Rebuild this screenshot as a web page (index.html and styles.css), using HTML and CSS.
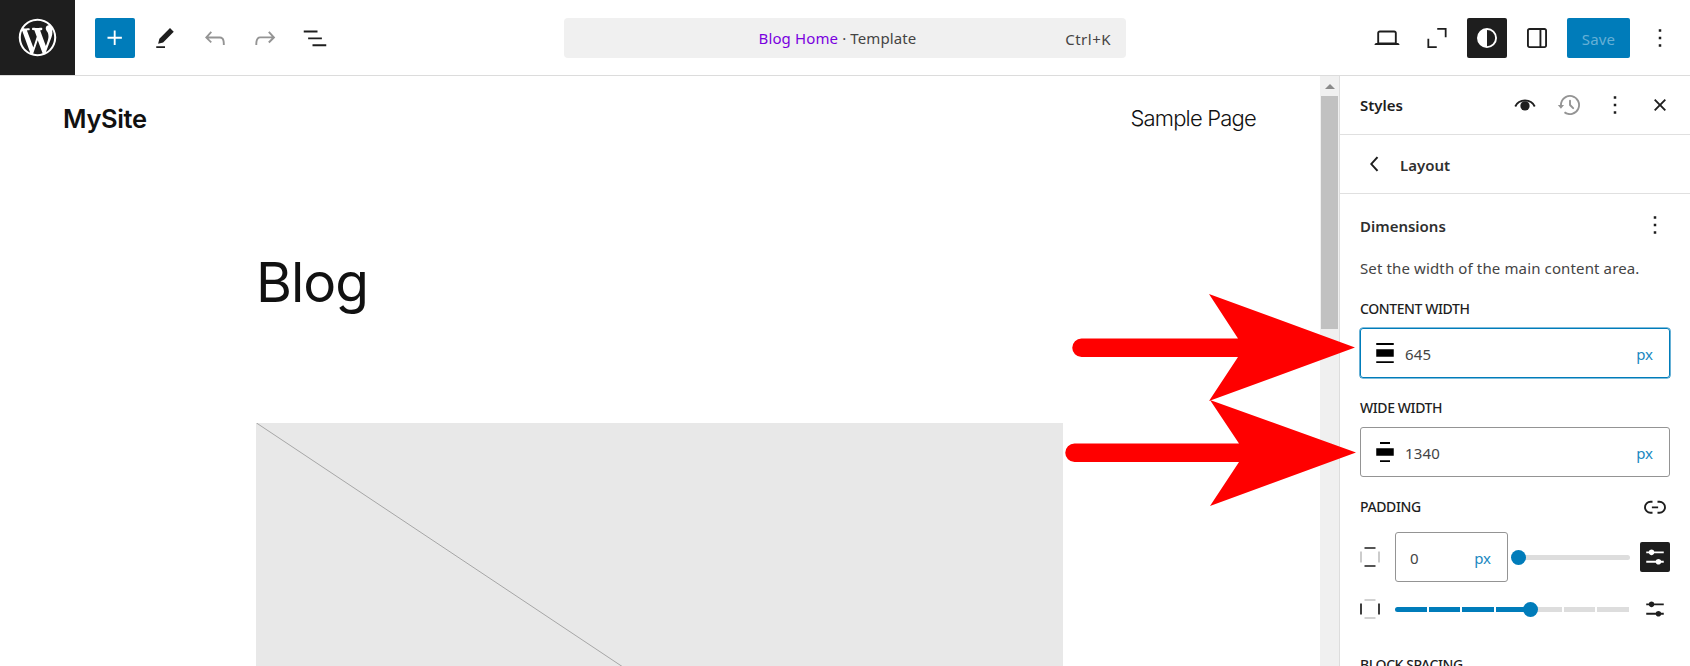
FILE: index.html
```html
<!DOCTYPE html>
<html lang="en">
<head>
<meta charset="utf-8">
<title>Blog Home · Template</title>
<link rel="stylesheet" href="styles.css">
</head>
<body>
<div class="editor">
  <header class="topbar">
    <a class="site-hub"><svg class="wp" viewBox="-2 -2 24 24"><path d="M20 10c0-5.51-4.49-10-10-10C4.48 0 0 4.49 0 10c0 5.52 4.48 10 10 10 5.51 0 10-4.48 10-10zM7.78 15.37L4.37 6.22c.55-.02 1.17-.08 1.17-.08.5-.06.44-1.13-.06-1.11 0 0-1.45.11-2.37.11-.18 0-.37 0-.58-.01C4.12 2.69 6.87 1.11 10 1.11c2.33 0 4.45.87 6.05 2.34-.68-.11-1.65.39-1.65 1.58 0 .74.45 1.36.9 2.1.35.61.55 1.36.55 2.46 0 1.49-1.4 5-1.4 5l-3.03-8.37c.54-.02.82-.17.82-.17.5-.05.44-1.25-.06-1.22 0 0-1.44.12-2.38.12-.87 0-2.33-.12-2.33-.12-.5-.03-.56 1.2-.06 1.22l.92.08 1.26 3.41zM17.41 10c.24-.64.74-1.87.43-4.25.7 1.29 1.05 2.71 1.05 4.25 0 3.29-1.73 6.24-4.4 7.78.97-2.59 1.94-5.2 2.92-7.78zM6.1 18.09C3.12 16.65 1.11 13.53 1.11 10c0-1.3.23-2.48.72-3.59C3.25 10.3 4.67 14.2 6.1 18.09zm4.03-6.63l2.58 6.98c-.86.29-1.76.45-2.71.45-.79 0-1.57-.11-2.29-.33.81-2.38 1.62-4.74 2.42-7.1z"/></svg></a>
    <div class="tools">
      <button class="tool primary"><svg class="icon" viewBox="0 0 24 24"><path d="M11 12.500V17.500H12.500V12.500H17.500V11H12.500V6H11V11H6V12.500H11Z"/></svg></button>
      <button class="tool"><svg class="icon" viewBox="0 0 24 24"><path d="m19 7-3-3-8.500 8.500-1 4 4-1L19 7Zm-7 11.500H5V20h7v-1.500Z"/></svg></button>
      <button class="tool muted"><svg class="icon" viewBox="0 0 24 24"><path d="M18.300 11.700c-.6-.6-1.400-.9-2.300-.9H6.700l2.900-3.300-1.100-1-4.500 5L8.500 16l1-1-2.700-2.700H16c.5 0 .9.2 1.300.5 1 1 1 3.400 1 4.500v.3h1.500v-.2c0-1.500 0-4.300-1.500-5.700z"/></svg></button>
      <button class="tool muted"><svg class="icon" viewBox="0 0 24 24"><path d="M15.600 6.500l-1.100 1 2.900 3.300H8c-.9 0-1.700.3-2.300.9-1.400 1.500-1.400 4.200-1.400 5.600v.2h1.500v-.3c0-1.100 0-3.500 1-4.500.3-.3.7-.5 1.300-.5h9.200L14.500 15l1.100 1.100 4.600-4.600-4.600-5z"/></svg></button>
      <button class="tool"><svg class="icon" viewBox="0 0 24 24"><path d="M3 6h11v1.500H3V6Zm3.500 5.500h11V13h-11v-1.500ZM21 17H10v1.500h11V17Z"/></svg></button>
    </div>
    <div class="command">
      <span class="command-title"><span class="command-link">Blog Home</span> · Template</span>
      <span class="command-key">Ctrl+K</span>
    </div>
    <div class="actions">
      <button class="tool"><svg class="icon" viewBox="0 0 24 24"><path d="M20.500 16h-.7V8c0-1.100-.9-2-2-2H6.200c-1.100 0-2 .9-2 2v8h-.7c-.8 0-1.500.7-1.500 1.500h20c0-.8-.7-1.500-1.500-1.500zM5.700 8c0-.3.2-.5.5-.5h11.600c.3 0 .5.2.5.5v7.600H5.700V8z"/></svg></button>
      <button class="tool"><svg class="icon line" viewBox="0 0 24 24"><path d="M12.200 4.300H19.300V11.400M4.700 12.600V19.700H11.800" transform="translate(.6 .6) scale(.95)"/></svg></button>
      <button class="tool pressed"><svg class="icon" viewBox="0 0 24 24"><path fill-rule="evenodd" d="M20 12a8 8 0 1 1-16 0 8 8 0 0 1 16 0Zm-1.500 0a6.500 6.500 0 0 1-6.500 6.500v-13a6.500 6.500 0 0 1 6.500 6.500Z"/></svg></button>
      <button class="tool"><svg class="icon" viewBox="0 0 24 24"><path d="M18 4H6c-1.100 0-2 .9-2 2v12c0 1.100.9 2 2 2h12c1.100 0 2-.9 2-2V6c0-1.100-.9-2-2-2zm-4 14.500H6c-.3 0-.5-.2-.5-.5V6c0-.3.2-.5.5-.5h8v13zm4.500-.5c0 .3-.2.5-.5.5h-2.500v-13H18c.3 0 .5.2.5.5v12z"/></svg></button>
      <button class="save">Save</button>
      <button class="tool"><svg class="icon" viewBox="0 0 24 24"><path d="M13 19h-2v-2h2v2zm0-6h-2v-2h2v2zm0-6h-2V5h2v2z"/></svg></button>
    </div>
  </header>
  <div class="workspace">
    <main class="canvas">
      <div class="site-header">
        <span class="site-title">MySite</span>
        <span class="site-nav">Sample Page</span>
      </div>
      <h1 class="blog-title">Blog</h1>
      <div class="placeholder"><svg class="diagonal" viewBox="0 0 807 540"><path d="M0.500 0L807 537"/></svg></div>
    </main>
    <div class="scrollbar"><div class="scroll-up"></div><div class="scroll-thumb"></div></div>
    <aside class="sidebar">
      <div class="panel-head">
        <span class="heading styles-title">Styles</span>
        <div class="head-icons">
          <svg class="icon" viewBox="0 0 24 24"><path class="lash" d="M4.200 13.200C5.600 10.200 8.500 8.400 12 8.400s6.400 1.800 7.800 4.800"/><circle cx="12" cy="12.700" r="3.700"/></svg>
          <svg class="icon faded" viewBox="0 0 24 24"><path d="M5.500 12h1.750l-2.500 3-2.500-3H4a8 8 0 113.134 6.350l.907-1.194A6.500 6.500 0 105.500 12zm9.530 1.970l-2.280-2.280V8.500a.75.75 0 00-1.500 0V12a.747.747 0 00.218.529l2.502 2.502a.75.75 0 101.060-1.061z"/></svg>
          <svg class="icon" viewBox="0 0 24 24"><path d="M13 19h-2v-2h2v2zm0-6h-2v-2h2v2zm0-6h-2V5h2v2z"/></svg>
          <svg class="icon" viewBox="0 0 24 24"><path d="M12 13.060l3.712 3.713 1.061-1.060L13.061 12l3.712-3.712-1.060-1.060L12 10.938 8.288 7.227l-1.061 1.060L10.939 12l-3.712 3.712 1.060 1.061L12 13.061z"/></svg>
        </div>
      </div>
      <div class="panel-nav">
        <svg class="icon" viewBox="0 0 24 24"><path d="M14.600 7l-1.200-1L8 12l5.400 6 1.200-1-4.600-5z"/></svg>
        <span class="heading layout-title">Layout</span>
      </div>
      <div class="panel-body">
        <div class="section-head">
          <span class="heading dims-title">Dimensions</span>
          <svg class="icon" viewBox="0 0 24 24"><path d="M13 19h-2v-2h2v2zm0-6h-2v-2h2v2zm0-6h-2V5h2v2z"/></svg>
        </div>
        <p class="help">Set the width of the main content area.</p>
        <div class="label content-label">CONTENT WIDTH</div>
        <div class="field focused">
          <svg class="icon solid" viewBox="0 0 24 24"><path d="M5 4h14v1.500H5zM5 9h14v6H5zM5 18.500h14V20H5z"/></svg>
          <span class="value">645</span><span class="unit">px</span>
        </div>
        <div class="label wide-label">WIDE WIDTH</div>
        <div class="field">
          <svg class="icon solid" viewBox="0 0 24 24"><path d="M8 4h8v1.500H8zM5 9h14v6H5zM8 18.500h8V20H8z"/></svg>
          <span class="value">1340</span><span class="unit">px</span>
        </div>
        <div class="padding-head">
          <span class="label padding-label">PADDING</span>
          <svg class="icon" viewBox="0 0 24 24"><path d="M10 17.389H8.444A5.194 5.194 0 1 1 8.444 7H10v1.500H8.444a3.694 3.694 0 0 0 0 7.389H10v1.500ZM14 7h1.556a5.194 5.194 0 0 1 0 10.390H14v-1.500h1.556a3.694 3.694 0 0 0 0-7.390H14V7Zm-4.500 6h5v-1.500h-5V13Z"/></svg>
        </div>
        <div class="control-row">
          <svg class="sides" viewBox="0 0 20 20"><path class="on" d="M4.500 1h11M4.500 19h11"/><path class="off" d="M1 4.500v11M19 4.500v11"/></svg>
          <div class="mini-field"><span class="mini-value">0</span><span class="mini-unit">px</span></div>
          <div class="slider short"><span class="thumb"></span></div>
          <button class="settings pressed"><svg class="icon" viewBox="0 0 24 24"><path d="m19 7.500h-7.628c-.309-.874-1.142-1.500-2.122-1.500s-1.813.626-2.122 1.500H5V9h2.128c.309.874 1.142 1.500 2.122 1.500s1.813-.626 2.122-1.500H19zM19 15h-2.128c-.309-.874-1.142-1.500-2.122-1.500s-1.813.626-2.122 1.500H5v1.500h7.628c.309.874 1.142 1.500 2.122 1.500s1.813-.626 2.122-1.500H19z"/></svg></button>
        </div>
        <div class="control-row second">
          <svg class="sides" viewBox="0 0 20 20"><path class="off" d="M4.500 1h11M4.500 19h11"/><path class="on" d="M1 4.500v11M19 4.500v11"/></svg>
          <div class="slider long"><i class="seg fill"></i><i class="seg fill"></i><i class="seg fill"></i><i class="seg fill"></i><i class="seg"></i><i class="seg"></i><i class="seg"></i><span class="thumb mid"></span></div>
          <button class="settings"><svg class="icon" viewBox="0 0 24 24"><path d="m19 7.500h-7.628c-.309-.874-1.142-1.500-2.122-1.500s-1.813.626-2.122 1.500H5V9h2.128c.309.874 1.142 1.500 2.122 1.500s1.813-.626 2.122-1.500H19zM19 15h-2.128c-.309-.874-1.142-1.500-2.122-1.500s-1.813.626-2.122 1.500H5v1.500h7.628c.309.874 1.142 1.500 2.122 1.500s1.813-.626 2.122-1.500H19z"/></svg></button>
        </div>
        <div class="label spacing-label">BLOCK SPACING</div>
      </div>
    </aside>
  </div>
  <svg class="arrows" viewBox="0 0 300 220"><path d="M9.500 44.500H166L137 0 283 53.500 137 107 166 63H9.500a9.250 9.250 0 0 1 0-18.500z"/><path d="M2.500 149.500H167L138 106 284 158.500 138 212 167 168H2.500a9.250 9.250 0 0 1 0-18.500z"/></svg>
</div>
</body>
</html>
```
FILE: styles.css
```css
* { box-sizing: border-box; }
body { margin: 0; background: #fff; color: #1e1e1e; font-family: "Noto Sans", "Open Sans", sans-serif; }
button { margin: 0; padding: 0; border: 0; background: none; color: inherit; font: inherit; }
svg { display: block; flex: none; fill: currentColor; }
.editor { position: relative; width: 1690px; height: 666px; overflow: hidden; display: flex; flex-direction: column; }
.icon { width: 30px; height: 30px; }

/* Top bar */
.topbar { flex: none; height: 76px; display: flex; align-items: flex-start; border-bottom: 1px solid #dcdcdc; }
.site-hub { width: 75px; height: 75px; background: #1e1e1e; color: #fff; display: flex; align-items: center; justify-content: center; }
.wp { width: 45px; height: 45px; }
.tools { display: flex; gap: 10px; padding: 18px 0 0 20px; width: 489px; }
.tool { width: 40px; height: 40px; border-radius: 2px; display: flex; align-items: center; justify-content: center; }
.primary { background: #007cba; color: #fff; }
.pressed { background: #1e1e1e; color: #fff; }
.muted { color: #949494; }
.line { fill: none; stroke: currentColor; stroke-width: 1.500; }
.command { margin-top: 18px; width: 562px; height: 40px; border-radius: 4px; background: #f0f0f0; color: #444; display: grid; grid-template-columns: 1fr auto 1fr; align-items: center; padding: 0 15px 0 0; font-size: 15px; line-height: 20px; letter-spacing: .12px; }
.command-title { grid-column: 2; padding-bottom: 1px; }
.command-link { color: #7a00df; }
.command-key { justify-self: end; padding-top: 1px; letter-spacing: .5px; }
.actions { margin-left: auto; padding: 18px 10px 0 0; display: flex; gap: 10px; }
.save { width: 63px; height: 40px; border-radius: 2px; background: #007cba; color: #66b0d6; font-size: 15px; letter-spacing: .2px; padding-top: 1px; }

/* Canvas */
.workspace { flex: 1; display: flex; min-height: 0; }
.canvas { width: 1320px; overflow: hidden; font-family: Inter, sans-serif; color: #111; }
.site-header { display: flex; justify-content: space-between; padding: 26px 64px 0 63px; line-height: 32px; }
.site-title { font-size: 25.500px; font-weight: 600; letter-spacing: -.35px; padding-top: 1px; }
.site-nav { font-size: 22px; font-weight: 300; letter-spacing: -.8px; }
.blog-title { margin: 111px 0 0 256px; font-size: 55px; line-height: 72px; font-weight: 400; letter-spacing: -1px; }
.placeholder { margin: 105px 0 0 256px; width: 807px; height: 540px; background: #e8e8e8; }
.diagonal { width: 807px; height: 540px; fill: none; stroke: #a6a6a6; stroke-width: 1; }
.scrollbar { width: 20px; background: #f0f0f0; border-right: 1px solid #ddd; padding: 0 1px; }
.scroll-up { height: 20px; display: flex; align-items: center; justify-content: center; }
.scroll-up::before { content: ""; border: 5px solid transparent; border-top: 0; border-bottom-color: #8a8a8a; }
.scroll-thumb { height: 233px; background: #c1c1c1; }

/* Sidebar */
.sidebar { width: 350px; overflow: hidden; }
.heading { font-weight: 600; font-size: 15px; line-height: 20px; }
.panel-head { height: 59px; border-bottom: 1px solid #e0e0e0; display: flex; align-items: center; justify-content: space-between; padding: 0 15px 0 20px; }
.head-icons { display: flex; gap: 15px; }
.panel-nav { height: 59px; border-bottom: 1px solid #e0e0e0; display: flex; align-items: center; padding-left: 20px; gap: 10px; }
.layout-title, .dims-title { padding-top: 2px; color: #2f2f2f; }
.panel-body { padding: 16px 20px 0; }
.section-head { display: flex; align-items: center; justify-content: space-between; height: 30px; }
.help { margin: 18px 0 0; font-size: 15px; line-height: 20px; letter-spacing: .13px; color: #444; white-space: nowrap; }
.label { font-size: 14px; font-weight: 500; line-height: 20px; letter-spacing: -.4px; white-space: nowrap; }
.content-label { margin-top: 21px; }
.field { height: 50px; margin-top: 9px; border: 1px solid #949494; border-radius: 3px; display: flex; align-items: center; padding: 0 16px 0 9px; font-size: 15px; }
.focused { border-color: #007cba; box-shadow: 0 0 0 .6px #007cba; }
.solid { color: #000; }
.value { margin-left: 5px; padding-top: 1px; letter-spacing: .2px; color: #444; }
.unit { margin-left: auto; padding-top: 2px; color: #1a89c1; }
.wide-label { margin-top: 20px; }
.padding-head { display: flex; align-items: center; justify-content: space-between; margin-top: 15px; height: 30px; }
.control-row { display: flex; align-items: center; height: 50px; margin-top: 10px; }
.sides { width: 20px; height: 20px; fill: none; stroke-width: 1.700; }
.on { stroke: #1e1e1e; }
.off { stroke: #c4c4c4; }
.lash { fill: none; stroke: currentColor; stroke-width: 1.500; }
.faded { color: #949494; }
.mini-field { width: 113px; height: 50px; margin-left: 15px; border: 1px solid #949494; border-radius: 3px; display: flex; align-items: center; justify-content: space-between; padding: 1px 16px 0 14px; font-size: 15px; color: #444; }
.mini-unit { color: #1a89c1; }
.slider { position: relative; height: 5px; }
.short { width: 112px; margin-left: 10px; background: #ddd; border-radius: 3px; }
.long { width: 234px; margin-left: 15px; display: flex; gap: 2px; }
.seg { flex: 1; background: #ddd; }
.seg.fill { background: #007cba; }
.seg:first-child { border-radius: 3px 0 0 3px; }
.thumb { position: absolute; width: 15px; height: 15px; left: -7px; top: -5px; border-radius: 50%; background: #007cba; }
.mid { left: 128px; }
.settings { width: 30px; height: 30px; margin-left: auto; border-radius: 2px; }
.second { margin-top: 2px; }
.spacing-label { margin-top: 21px; }

/* Annotation arrows */
.arrows { position: absolute; left: 1072px; top: 294px; width: 300px; height: 220px; fill: #f00; overflow: visible; }
```
